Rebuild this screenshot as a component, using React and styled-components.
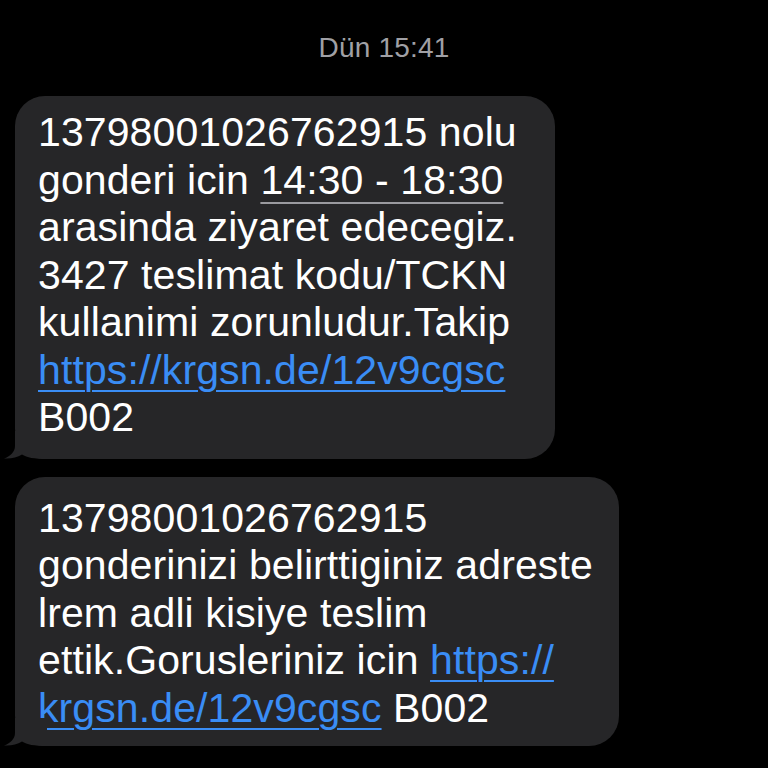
import React from 'react';
import styled, { createGlobalStyle } from 'styled-components';

const GlobalStyle = createGlobalStyle`
	html, body {
		margin: 0;
		padding: 0;
		background: #000000;
	}
	body {
		font-family: 'Liberation Sans', Arial, sans-serif;
		-webkit-font-smoothing: antialiased;
	}
`;

const Screen = styled.div`
	width: 768px;
	height: 768px;
	background: #000000;
	overflow: hidden;
	display: flex;
	flex-direction: column;
	padding: 32px 0 0 15px;
	box-sizing: border-box;
`;

const Stamp = styled.div`
	align-self: center;
	margin-left: -15px;
	height: 32px;
	line-height: 32px;
	font-size: 28px;
	color: #a0a0a5;
	letter-spacing: 0.2px;
	margin-bottom: 32px;
`;

const Thread = styled.div`
	display: flex;
	flex-direction: column;
	gap: 18px;
	align-items: flex-start;
`;

const Bubble = styled.div`
	position: relative;
	width: ${props => props.$w}px;
	box-sizing: border-box;
	background: #262628;
	border-radius: 30px;
	padding: ${props => props.$pt}px 20px ${props => props.$pb}px 23px;
	color: #ffffff;
	font-size: 41px;
	line-height: 47.5px;
	letter-spacing: 0.1px;
	white-space: nowrap;
`;

const Tail = styled.svg`
	position: absolute;
	left: -12px;
	bottom: 0;
	width: 44px;
	height: 28px;
	display: block;
`;

const DateLink = styled.span`
	text-decoration: underline;
	text-decoration-color: #9a9a9f;
	text-decoration-thickness: 2px;
	text-underline-offset: 8px;
`;

const UrlLink = styled.span`
	color: #3a8df5;
	text-decoration: underline;
	text-decoration-thickness: 2px;
	text-underline-offset: 6px;
`;

const BubbleTail = () => (
	<Tail viewBox="0 0 44 28">
		<path
			d="M12 0 L12 15 C12 21 7 25.5 1 27.5 C8 28 14 26.5 19 23.5 C24 26.5 31 28 44 28 L44 0 Z"
			fill="#262628"
		/>
	</Tail>
);

const App = () => {
	return (
		<React.Fragment>
			<GlobalStyle />
			<Screen>
				<Stamp>Dün 15:41</Stamp>
				<Thread>
					<Bubble $w={540} $pt={13} $pb={17}>
						13798001026762915 nolu
						<br />
						gonderi icin <DateLink>14:30 - 18:30</DateLink>
						<br />
						arasinda ziyaret edecegiz.
						<br />
						3427 teslimat kodu/TCKN
						<br />
						kullanimi zorunludur.Takip
						<br />
						<UrlLink>https://krgsn.de/12v9cgsc</UrlLink>
						<br />
						B002
						<BubbleTail />
					</Bubble>
					<Bubble $w={604} $pt={18} $pb={14}>
						13798001026762915
						<br />
						gonderinizi belirttiginiz adreste
						<br />
						lrem adli kisiye teslim
						<br />
						ettik.Gorusleriniz icin <UrlLink>https://</UrlLink>
						<br />
						<UrlLink>krgsn.de/12v9cgsc</UrlLink> B002
						<BubbleTail />
					</Bubble>
				</Thread>
			</Screen>
		</React.Fragment>
	);
};

export default App;
